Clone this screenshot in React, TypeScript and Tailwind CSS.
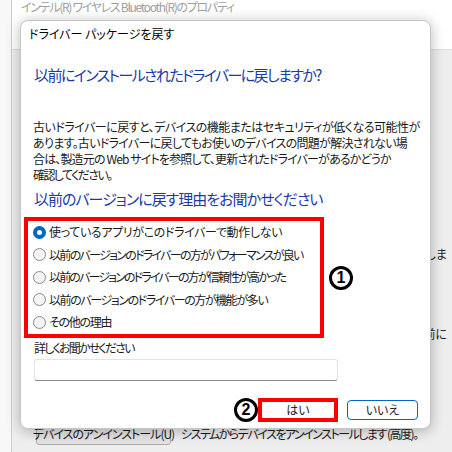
const jp = "font-['Noto_Sans_CJK_JP',sans-serif] [font-feature-settings:'palt']";

const reasons = [
    { text: "使っているアプリがこのドライバーで動作しない", track: "tracking-[-0.35px]" },
    { text: "以前のバージョンのドライバーの方がパフォーマンスが良い", track: "tracking-[-1.7px]" },
    { text: "以前のバージョンのドライバーの方が信頼性が高かった", track: "tracking-[-1.85px]" },
    { text: "以前のバージョンのドライバーの方が機能が多い", track: "tracking-[-1.4px]" },
    { text: "その他の理由", track: "tracking-[-1.3px]" },
];

const notes = [
    { text: "古いドライバーに戻すと、デバイスの機能またはセキュリティが低くなる可能性が", track: "tracking-[-0.5px]" },
    { text: "あります。古いドライバーに戻してもお使いのデバイスの問題が解決されない場", track: "tracking-[-0.7px]" },
    { text: "合は、製造元の Web サイトを参照して、更新されたドライバーがあるかどうか", track: "tracking-[-0.85px]" },
    { text: "確認してください。", track: "tracking-[-1.6px]" },
];

const Circled = ({ n }: { n: string }) => (
    <div className="flex h-[24px] w-[24px] shrink-0 items-center justify-center rounded-full border-[3.5px] border-black bg-white shadow-[0_0_0_1.5px_white]">
        <span className="font-['Liberation_Sans',sans-serif] text-[16px] font-black leading-none text-black">{n}</span>
    </div>
);

const Radio = ({ checked }: { checked: boolean }) =>
    checked ? (
        <span className="flex h-[13px] w-[13px] shrink-0 items-center justify-center rounded-full bg-[#0067c0]">
            <span className="h-[5px] w-[5px] rounded-full bg-white" />
        </span>
    ) : (
        <span className="h-[13px] w-[13px] shrink-0 rounded-full border border-[#8a8a8a] bg-[#f4f4f4]" />
    );

const App = () => {
    return (
        <div className={`relative flex h-[452px] w-[452px] overflow-hidden bg-[#eeeeee] text-[#1a1a1a] ${jp}`}>
            {/* parent property window */}
            <div className="w-[12px] shrink-0 border-r border-[#cdcdcd] bg-[#f8f8f8]" />
            <div className="flex min-w-0 flex-1 flex-col">
                <div className="h-[50px] shrink-0 border-b border-[#dcdcdc] bg-white pl-[9px] pt-[1px]">
                    <p className="whitespace-nowrap text-[12px] leading-[12px] tracking-[-1.3px] text-[#a0a0a0]">
                        インテル(R) ワイヤレス Bluetooth(R)のプロパティ
                    </p>
                </div>
                <div className="mt-[196px] flex h-[16px] justify-end pr-[5px]">
                    <span className="whitespace-nowrap text-[12px] leading-[16px]">に戻しま</span>
                </div>
                <div className="mt-[64px] flex h-[16px] justify-end pr-[5px]">
                    <span className="whitespace-nowrap text-[12px] leading-[16px]">以前に</span>
                </div>
                <div className="mt-[81px] flex items-center">
                    <div className="ml-[24px] flex h-[22px] w-[135px] shrink-0 items-center justify-center whitespace-nowrap rounded-[3px] border border-[#adadad] bg-[#e4e4e4] text-[12px] tracking-[-1px]">
                        デバイスのアンインストール(U)
                    </div>
                    <span className="ml-[10px] whitespace-nowrap text-[12px] tracking-[-1.5px]">
                        システムからデバイスをアンインストールします (高度)。
                    </span>
                </div>
            </div>

            {/* modal dialog */}
            <div className="absolute left-[20px] top-[20px] flex h-[409px] w-[411px] flex-col rounded-[8px] border border-[#c6c6c6] bg-white shadow-[0_2px_14px_rgba(0,0,0,0.28)]">
                <p className="pl-[8px] pt-[5px] text-[12px] leading-[16px] text-black">ドライバー パッケージを戻す</p>

                <h1 className="mt-[23px] whitespace-nowrap pl-[13px] text-[15px] leading-[20px] tracking-[-1.6px] text-[#1c3aa6]">
                    以前にインストールされたドライバーに戻しますか?
                </h1>

                <div className="mt-[34px] pl-[12px] text-[12px] leading-[16px]">
                    {notes.map((n) => (
                        <p key={n.text} className={`whitespace-nowrap ${n.track}`}>
                            {n.text}
                        </p>
                    ))}
                </div>

                <h2 className="mt-[6px] whitespace-nowrap pl-[13px] text-[15px] leading-[20px] tracking-[-1px] text-[#1c3aa6]">
                    以前のバージョンに戻す理由をお聞かせください
                </h2>

                <div className="ml-[3px] mt-[8px] flex items-center gap-[5px]">
                    <div className="w-[300px] border-4 border-[#ff0000] pb-[0.5px] pl-[5px]">
                        {reasons.map((r, i) => (
                            <label key={r.text} className="flex h-[22.5px] items-center gap-[3px] text-[12px]">
                                <Radio checked={i === 0} />
                                <span className={`whitespace-nowrap ${r.track}`}>{r.text}</span>
                            </label>
                        ))}
                    </div>
                    <Circled n="1" />
                </div>

                <p className="mt-[2px] pl-[13px] text-[12px] leading-[16px] tracking-[-1.8px]">詳しくお聞かせください</p>
                <div className="ml-[13px] mt-[3px] h-[22px] w-[304px] rounded-[3px] border border-[#e3e3e3] border-b-[#8a8a8a] bg-white" />

                <div className="mt-[17px] flex items-center justify-end pr-[12px]">
                    <Circled n="2" />
                    <div className="border-4 border-[#ff0000]">
                        <div className="flex h-[16px] w-[72px] items-center justify-center bg-[#fdfdfd] text-[12px] leading-none">
                            はい
                        </div>
                    </div>
                    <button className="ml-[9px] flex h-[20px] w-[71px] items-center justify-center rounded-[4px] border border-[#0067c0] bg-white text-[12px] leading-none">
                        いいえ
                    </button>
                </div>
            </div>
        </div>
    );
};

export default App;
